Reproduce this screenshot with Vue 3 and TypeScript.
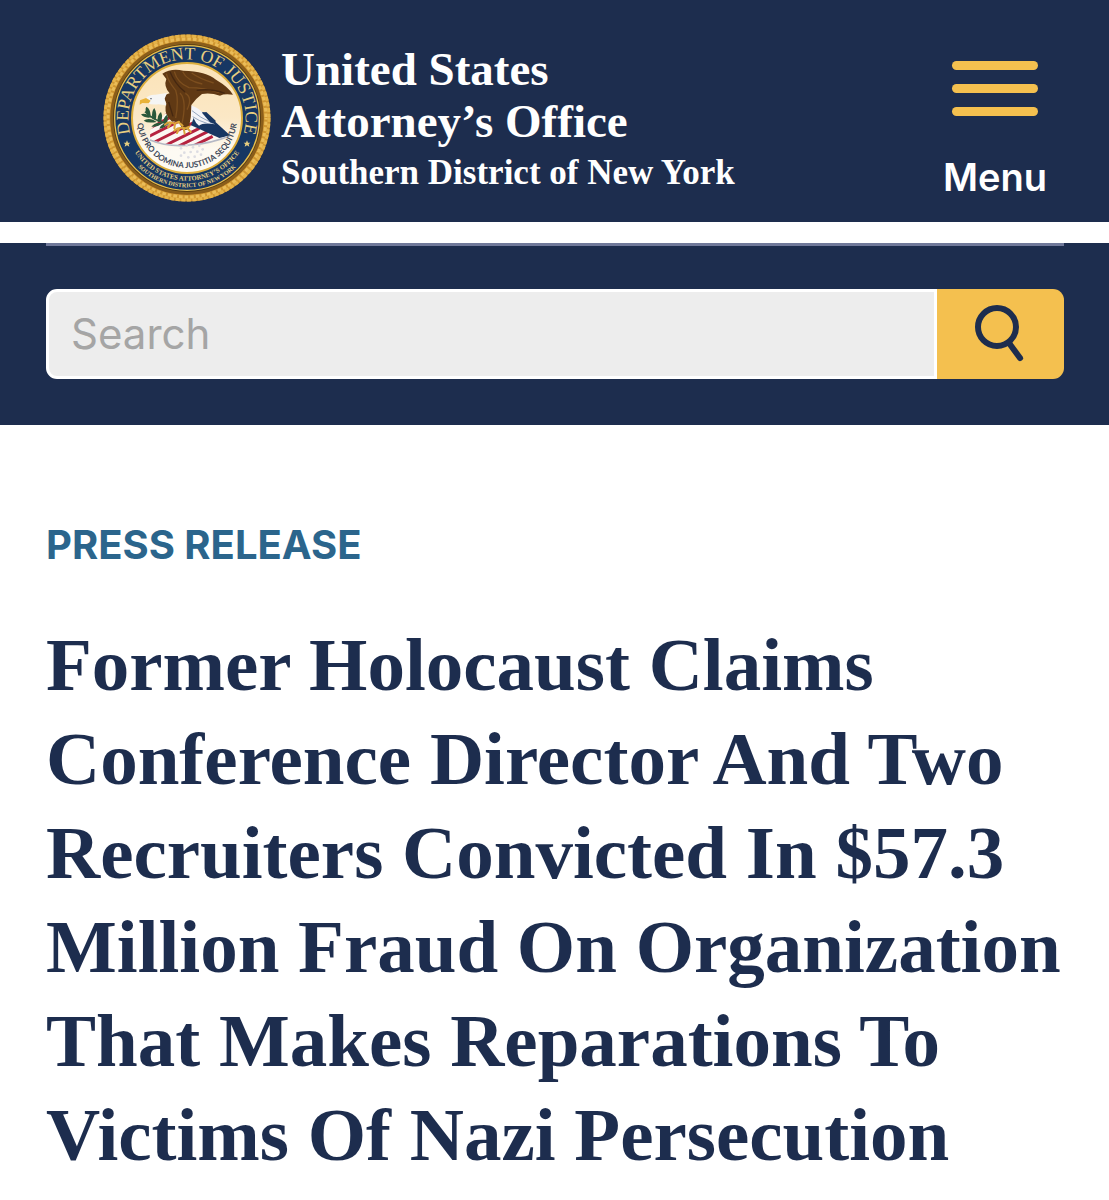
<script setup lang="ts">
import { ref } from 'vue'

const query = ref('')
const menuOpen = ref(false)

const headline: string[] = [
  'Former Holocaust Claims',
  'Conference Director And Two',
  'Recruiters Convicted In $57.3',
  'Million Fraud On Organization',
  'That Makes Reparations To',
  'Victims Of Nazi Persecution',
]
</script>

<template>
  <div class="page">
    <header class="masthead">
      <a class="brand" href="#home">
        <svg class="seal" viewBox="21 26 504 504" role="img" aria-label="Department of Justice seal">
          <defs>
            <path id="arc-top" d="M273 454 A176 176 0 0 1 273 102 A176 176 0 0 1 273 454" />
            <path id="arc-motto" d="M273 128 A150 150 0 0 0 273 428 A150 150 0 0 0 273 128" />
            <path id="arc-office" d="M85 278 A188 188 0 0 0 461 278" />
            <path id="arc-district" d="M65 278 A208 208 0 0 0 481 278" />
            <linearGradient id="field" x1="0" y1="0" x2="0" y2="1">
              <stop offset="0" stop-color="#fbe3b8" />
              <stop offset="0.5" stop-color="#fbe8c6" />
              <stop offset="0.8" stop-color="#fdfaf3" />
            </linearGradient>
            <clipPath id="shield-clip">
              <path d="M162 342 L163 315 L214 259 L300 255 L328 262 L402 330 Q350 352 290 358 Q220 364 162 342Z" />
            </clipPath>
          </defs>
          <circle cx="273" cy="278" r="243" fill="#8a5f1c" />
          <circle cx="273" cy="278" r="240" fill="none" stroke="#cf9631" stroke-width="21" />
          <circle cx="273" cy="278" r="246" fill="none" stroke="#e5b349" stroke-width="9" stroke-dasharray="12 5" />
          <circle cx="273" cy="278" r="237" fill="none" stroke="#eabc58" stroke-width="9" stroke-dasharray="11 6" stroke-dashoffset="6" />
          <circle cx="273" cy="278" r="228" fill="none" stroke="#8b5d1a" stroke-width="4" />
          <circle cx="273" cy="278" r="222" fill="#5a3d12" />
          <circle cx="273" cy="278" r="217" fill="#163763" stroke="#e7bf4e" stroke-width="4" />
          <circle cx="273" cy="278" r="165" fill="url(#field)" stroke="#dcae3c" stroke-width="6" />

          <g clip-path="url(#shield-clip)">
            <rect x="150" y="250" width="270" height="120" fill="#fbf7f3" />
            <g stroke="#b5223f" stroke-width="9">
              <path d="M155 287 L235 247M153 312 L250 262M155 335 L270 277M176 350 L290 293M210 359 L310 309M245 364 L335 319M282 367 L350 333" />
            </g>
            <path d="M285 300 L300 258 L330 260 L404 330 L370 338Z" fill="#173662" />
          </g>
          <path d="M162 344 Q215 366 282 359 Q348 354 402 331" fill="none" stroke="#b5b8c5" stroke-width="5" />
          <path d="M284 240 Q309 249 320 262 L357 297 Q322 291 309 301 Q289 288 284 240Z" fill="#f3f4f8" />
          <path d="M288 256 Q310 276 350 294 M290 274 Q309 287 333 294" fill="none" stroke="#94a6bf" stroke-width="3" />
          <path d="M318 262 L331 260 L359 286 L357 297 L342 291Z" fill="#183762" />

          <path d="M199 145 Q225 128 262 136 Q330 137 360 163 Q399 186 411 208 Q385 204 372 211 Q345 202 318 206 Q301 218 286 239 Q287 275 278 311 L262 316 L251 295 Q240 286 228 289 L216 276 Q204 257 211 234 L201 211 L221 204 Q202 183 211 161Z" fill="#603914" />
          <path d="M211 145 Q217 169 239 195 Q249 225 239 278 M235 139 Q244 173 279 187 Q323 187 370 202 M260 139 Q273 166 319 176 M287 143 Q310 160 353 173 M252 203 Q274 225 257 299 M268 204 Q291 217 273 253" fill="none" stroke="#7c4e1e" stroke-width="4" />
          <path d="M222 139 Q237 176 267 200 M218 230 L231 273 M302 195 Q349 189 386 204" fill="none" stroke="#452710" stroke-width="4" />
          <path d="M148 220 Q158 207 178 208 L213 203 L206 220 L211 240 L187 237 Q168 239 151 233Z" fill="#f5f5f4" />
          <path d="M150 218 L132 225 L131 238 L139 233 L158 234 L164 226Z" fill="#e9b33a" />
          <circle cx="165" cy="220" r="2" fill="#263143" />

          <path d="M147 259 Q174 287 218 296" fill="none" stroke="#315c40" stroke-width="5" />
          <g fill="#2a583b">
            <path d="M154 268 Q145 254 151 244 Q163 250 164 270Z M169 280 Q165 259 175 248 Q184 264 179 284Z M185 289 Q183 269 195 260 Q202 276 194 291Z M159 270 Q143 263 135 267 Q145 280 166 276Z M171 283 Q152 278 143 286 Q155 295 182 290Z M188 292 Q174 293 166 304 Q183 307 201 294Z M202 292 Q202 275 213 268 Q219 283 211 294Z M205 294 Q194 300 190 310 Q207 308 216 295Z" />
          </g>
          <g fill="none" stroke="#dba53a" stroke-width="6" stroke-linecap="round">
            <path d="M207 298 Q218 285 235 295 L249 289M224 295 L216 306M237 295 L235 309M248 291 L260 301M235 316 Q248 304 268 309 L280 304M249 311 L243 323M263 309 L266 325M273 307 L284 320" />
          </g>
          <g fill="#dcdce2">
            <circle cx="255" cy="369" r="4" /><circle cx="272" cy="361" r="4" /><circle cx="291" cy="366" r="4" />
            <circle cx="310" cy="361" r="4" /><circle cx="265" cy="382" r="4" /><circle cx="284" cy="380" r="4" />
            <circle cx="304" cy="379" r="4" /><circle cx="320" cy="372" r="4" /><circle cx="277" cy="396" r="4" />
            <circle cx="296" cy="394" r="4" /><circle cx="255" cy="391" r="4" /><circle cx="315" cy="388" r="4" />
          </g>

          <text class="seal-serif" font-size="53" fill="#e8cf80" text-anchor="middle"><textPath href="#arc-top" startOffset="50%">DEPARTMENT OF JUSTICE</textPath></text>
          <text class="seal-sans" font-size="24" fill="#3e4858" text-anchor="middle"><textPath href="#arc-motto" startOffset="50%">QUI PRO DOMINA JUSTITIA SEQUITUR</textPath></text>
          <text class="seal-serif bold" font-size="20" fill="#e8cf80" text-anchor="middle"><textPath href="#arc-office" startOffset="50%">UNITED STATES ATTORNEY’S OFFICE</textPath></text>
          <text class="seal-serif bold" font-size="18" fill="#e8cf80" text-anchor="middle"><textPath href="#arc-district" startOffset="50%">SOUTHERN DISTRICT OF NEW YORK</textPath></text>
          <g fill="#e8cf80">
            <path d="M93 345 L96 352 L103 352 L98 357 L100 364 L93 360 L86 364 L88 357 L83 352 L90 352Z" />
            <path d="M453 345 L456 352 L463 352 L458 357 L460 364 L453 360 L446 364 L448 357 L443 352 L450 352Z" />
          </g>
        </svg>
        <span class="titles">
          <span class="office">United States</span>
          <span class="office">Attorney’s Office</span>
          <span class="district">Southern District of New York</span>
        </span>
      </a>
      <button class="menu" type="button" :aria-expanded="menuOpen" @click="menuOpen = !menuOpen">
        <span class="bars" aria-hidden="true"><i></i><i></i><i></i></span>
        Menu
      </button>
    </header>

    <section class="search-panel">
      <form class="search" role="search" @submit.prevent>
        <input v-model="query" type="search" placeholder="Search" aria-label="Search" />
        <button type="submit" aria-label="Submit search">
          <svg viewBox="0 0 54 60" width="54" height="60" fill="none" stroke="#1d2d4e" stroke-width="6" stroke-linecap="round" aria-hidden="true">
            <circle cx="23" cy="23" r="19" />
            <path d="M35 39 L46 54" />
          </svg>
        </button>
      </form>
    </section>

    <main class="article">
      <p class="kicker">PRESS RELEASE</p>
      <h1>
        <span v-for="line in headline" :key="line">{{ line }}</span>
      </h1>
    </main>
  </div>
</template>

<style>
body {
  margin: 0;
  background: #fff;
}
</style>

<style scoped>
.page {
  font-family: Inter, 'Liberation Sans', sans-serif;
  color: #1d2d4e;
}
.masthead {
  display: flex;
  justify-content: space-between;
  align-items: flex-start;
  box-sizing: border-box;
  min-height: 222px;
  padding: 34px 62px 20px 103px;
  background: #1d2d4e;
}
.brand {
  display: flex;
  gap: 10px;
  color: #fff;
  text-decoration: none;
}
.seal {
  flex: none;
  width: 168px;
  height: 168px;
}
.seal-serif {
  font-family: 'Liberation Serif', serif;
}
.seal-sans {
  font-family: Lato, sans-serif;
  font-weight: 700;
}
.bold {
  font-weight: 700;
}
.titles {
  display: flex;
  flex-direction: column;
  padding-top: 9px;
  font-family: 'Liberation Serif', serif;
  font-weight: 700;
  white-space: nowrap;
}
.office {
  font-size: 47px;
  line-height: 52px;
}
.district {
  font-size: 35px;
  line-height: 52px;
}
.menu {
  display: flex;
  flex-direction: column;
  align-items: center;
  gap: 36px;
  padding: 27px 0 0;
  border: 0;
  background: none;
  color: #fff;
  font: 600 38px/50px Inter, sans-serif;
}
.bars {
  display: flex;
  flex-direction: column;
  gap: 14px;
}
.bars i {
  width: 86px;
  height: 9px;
  border-radius: 5px;
  background: #f4c04f;
}
.search-panel {
  margin-top: 21px;
  padding: 0 45px 46px 46px;
  background: #1d2d4e;
}
.search-panel::before {
  content: '';
  display: block;
  height: 3px;
  margin-bottom: 43px;
  background: #70799a;
}
.search {
  display: flex;
  height: 90px;
}
.search input {
  flex: 1;
  min-width: 0;
  box-sizing: border-box;
  padding: 0 22px;
  border: 3px solid #fff;
  border-radius: 11px 0 0 11px;
  background: #ededed;
  color: #1d2d4e;
  font: 400 42px/50px Inter, sans-serif;
  appearance: none;
  outline: none;
}
.search input::placeholder {
  color: #a5a5a5;
}
.search button {
  display: flex;
  align-items: center;
  justify-content: center;
  width: 127px;
  padding: 0;
  border: 0;
  border-radius: 0 11px 11px 0;
  background: #f4c04f;
}
.article {
  padding: 95px 46px 16px;
}
.kicker {
  margin: 0;
  color: #2b658c;
  font-size: 40px;
  font-weight: 700;
  line-height: 50px;
}
h1 {
  margin: 48px 0 0;
  font-family: 'Liberation Serif', serif;
  font-size: 75px;
  font-weight: 700;
  line-height: 94px;
}
h1 span {
  display: block;
  white-space: nowrap;
}
</style>
